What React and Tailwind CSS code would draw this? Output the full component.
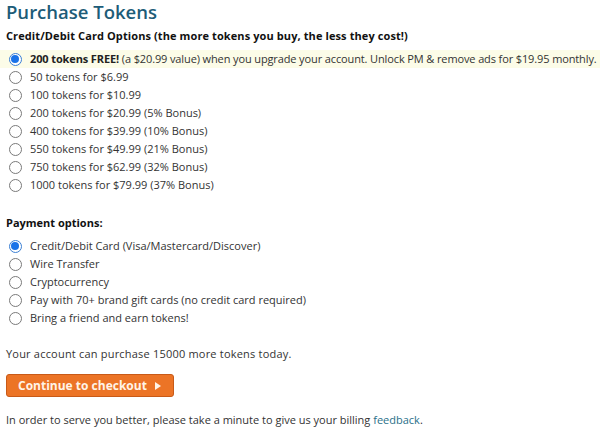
import React from "react";

function Radio({ checked }) {
  return (
    <span className="flex h-[18px] w-[18px] shrink-0 items-center justify-center">
      {checked ? (
        <span className="flex h-[13px] w-[13px] items-center justify-center rounded-full border border-[#3b7fd4] bg-white">
          <span className="h-[8px] w-[8px] rounded-full bg-[#1a73e8]" />
        </span>
      ) : (
        <span className="h-[13px] w-[13px] rounded-full border border-[#7a7a7a] bg-white" />
      )}
    </span>
  );
}

function Row({ checked, highlight, children }) {
  return (
    <div className={"flex h-[18px] items-center gap-[6px] pl-[6px] " + (highlight ? "bg-[#fcfce8] tracking-[-0.12px]" : "")}>
      <Radio checked={checked} />
      <span className="whitespace-nowrap">{children}</span>
    </div>
  );
}

export default function App() {
  const tokens = [
    "50 tokens for $6.99",
    "100 tokens for $10.99",
    "200 tokens for $20.99 (5% Bonus)",
    "400 tokens for $39.99 (10% Bonus)",
    "550 tokens for $49.99 (21% Bonus)",
    "750 tokens for $62.99 (32% Bonus)",
    "1000 tokens for $79.99 (37% Bonus)",
  ];
  const pays = [
    "Wire Transfer",
    "Cryptocurrency",
    "Pay with 70+ brand gift cards (no credit card required)",
    "Bring a friend and earn tokens!",
  ];
  return (
    <div className="h-[429px] w-[600px] overflow-hidden bg-white text-[11px] text-[#333] [font-family:'Open_Sans',sans-serif]">
      <div className="pl-[6px] text-[18.5px] font-semibold leading-[24px] text-[#1d5c78]">Purchase Tokens</div>
      <div className="mt-[3px] pl-[6px] text-[11px] font-bold leading-[18px] tracking-[0.1px] text-[#111]">
        Credit/Debit Card Options (the more tokens you buy, the less they cost!)
      </div>
      <div className="mt-[5px] flex flex-col">
        <Row checked highlight>
          <span className="font-bold text-[#222]">200 tokens FREE!</span> (a $20.99 value) when you upgrade your account. Unlock PM &amp; remove ads for $19.95 monthly.
        </Row>
        {tokens.map((t) => (
          <Row key={t}>{t}</Row>
        ))}
      </div>
      <div className="mt-[20px] pl-[6px] font-bold leading-[18px] text-[#111]">Payment options:</div>
      <div className="mt-[5px] flex flex-col">
        <Row checked>Credit/Debit Card (Visa/Mastercard/Discover)</Row>
        {pays.map((t) => (
          <Row key={t}>{t}</Row>
        ))}
      </div>
      <div className="mt-[18px] pl-[6px] leading-[18px] tracking-[0.2px]">Your account can purchase 15000 more tokens today.</div>
      <div className="mt-[11px] pl-[6px]">
        <button className="flex h-[23px] w-[168px] items-center gap-[8px] rounded-[3px] border border-[#c85a18] bg-[#ec7426] pl-[11px] text-[12px] font-bold text-[#fff4e8]">
          Continue to checkout
          <svg width="6" height="8" viewBox="0 0 6 8"><path d="M0 0 L6 4 L0 8 Z" fill="#fff4e8" /></svg>
        </button>
      </div>
      <div className="mt-[14px] pl-[6px] leading-[18px]">
        In order to serve you better, please take a minute to give us your billing <span className="text-[#2a6f8a]">feedback</span>.
      </div>
    </div>
  );
}
